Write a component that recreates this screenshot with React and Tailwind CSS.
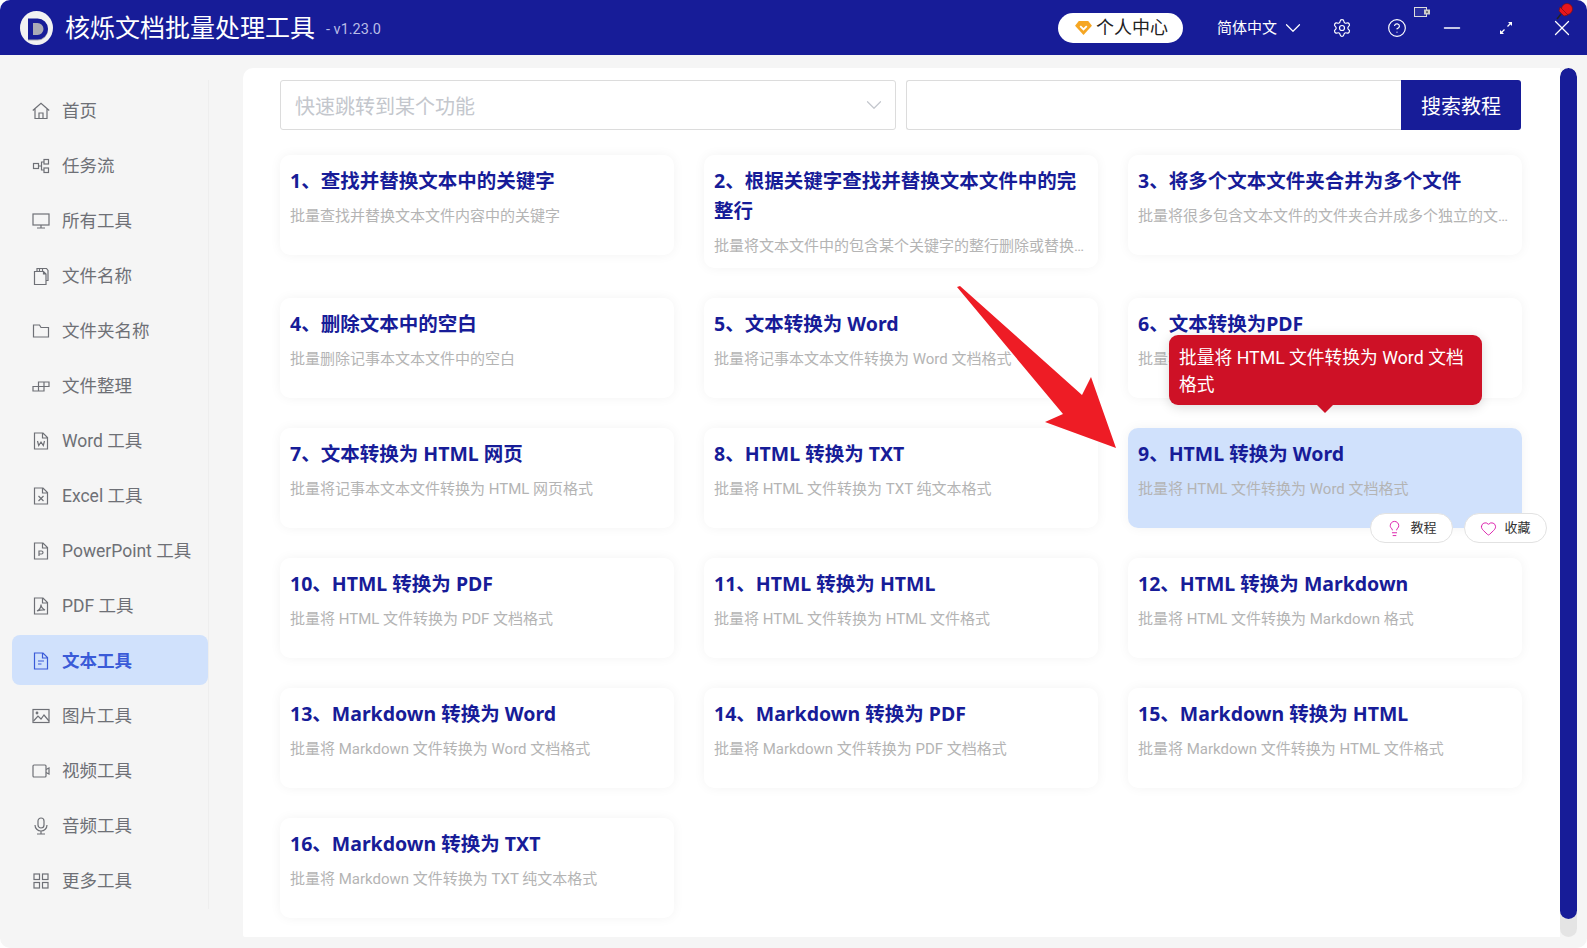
import { ChevronDown, Heart, Lightbulb, Settings, CircleHelp, Minus, X } from 'lucide-react';

const FONT = "font-['Roboto','Noto_Sans_CJK_SC',sans-serif]";

const Doc = ({ children }) => (
  <svg viewBox="0 0 18 18" className="w-[18px] h-[18px]" fill="none" stroke="currentColor" strokeWidth="1.2">
    <path d="M2.500 1h8.500l4.500 4.500V17h-13z M10.500 1v5h5" />
    {children}
  </svg>
);

const Svg = ({ children }) => (
  <svg viewBox="0 0 18 18" className="w-[18px] h-[18px]" fill="none" stroke="currentColor" strokeWidth="1.2">
    {children}
  </svg>
);

const navItems = [
  ['首页', <Svg><path d="M.8 8.500 9 1.200l8.200 7.300M3 7v9.500h12V7M7 16.500V11h4v5.500" /></Svg>],
  ['任务流', <Svg><rect x="1.500" y="6.500" width="5" height="5" /><rect x="12" y="2.500" width="4.500" height="4.500" /><rect x="12" y="11" width="4.500" height="4.500" /><path d="M6.500 9H9.500V5H12M9.500 9v4H12" /></Svg>],
  ['所有工具', <Svg><rect x="1" y="2" width="16" height="11" /><path d="M9 13v3M5 16h8" /></Svg>],
  ['文件名称', <Svg><path d="M2.500 4.500v13h11.500V7l-2.500-2.500zM11.500 4.500V7H14M5 4.500V1.500h9.500l1.500 2v10h-2" /><path d="M7.500 1.500v3M10.500 1.500v3" /></Svg>],
  ['文件夹名称', <Svg><path d="M1.500 3h6l1.500 2.500h7.500V15h-15z" /></Svg>],
  ['文件整理', <Svg><path d="M1 9.500h5.500V14H1zM6.500 9.500h5.500V14H6.500zM6.500 9.500V5h5.500v4.500M12 5h5v4.500h-5" /></Svg>],
  ['Word 工具', <Doc><path d="M5.500 9l1.200 4.500L9 10l2.300 3.500L12.500 9" /></Doc>],
  ['Excel 工具', <Doc><path d="M6.500 9l5 5M11.500 9l-5 5" /></Doc>],
  ['PowerPoint 工具', <Doc><path d="M7 14V9h2.500a1.500 1.500 0 0 1 0 3H7" /></Doc>],
  ['PDF 工具', <Doc><path d="M9 7.500c0 3-2 5.500-4 6.500 3-1 5-1.500 8-1-2-1-4-3-4-5.500z" /></Doc>],
  ['文本工具', <Doc><path d="M6 9h6M6 12h3.500" /></Doc>],
  ['图片工具', <Svg><rect x="1" y="2.500" width="16" height="13" /><path d="M1.500 14l4.500-5 3 3 3-4 5 6" /><circle cx="5" cy="6" r="0.800" /></Svg>],
  ['视频工具', <Svg><rect x="1" y="3" width="13" height="12" rx="1" /><path d="M14 7.500l3-1.500v6l-3-1.500" /></Svg>],
  ['音频工具', <Svg><rect x="6" y="1" width="6" height="10" rx="3" /><path d="M3 8a6 6 0 0 0 12 0M9 14v3M5 17h8" /></Svg>],
  ['更多工具', <Svg><rect x="2" y="2" width="5.500" height="5.500" /><rect x="10.500" y="2" width="5.500" height="5.500" /><rect x="2" y="10.500" width="5.500" height="5.500" /><rect x="10.500" y="10.500" width="5.500" height="5.500" /></Svg>],
];

const cards = [
  ['1、查找并替换文本中的关键字', '批量查找并替换文本文件内容中的关键字'],
  ['2、根据关键字查找并替换文本文件中的完整行', '批量将文本文件中的包含某个关键字的整行删除或替换为其他内容'],
  ['3、将多个文本文件夹合并为多个文件', '批量将很多包含文本文件的文件夹合并成多个独立的文本文件'],
  ['4、删除文本中的空白', '批量删除记事本文本文件中的空白'],
  ['5、文本转换为 Word', '批量将记事本文本文件转换为 Word 文档格式'],
  ['6、文本转换为PDF', '批量将记事本文本文件转换为 PDF 文档格式'],
  ['7、文本转换为 HTML 网页', '批量将记事本文本文件转换为 HTML 网页格式'],
  ['8、HTML 转换为 TXT', '批量将 HTML 文件转换为 TXT 纯文本格式'],
  ['9、HTML 转换为 Word', '批量将 HTML 文件转换为 Word 文档格式'],
  ['10、HTML 转换为 PDF', '批量将 HTML 文件转换为 PDF 文档格式'],
  ['11、HTML 转换为 HTML', '批量将 HTML 文件转换为 HTML 文件格式'],
  ['12、HTML 转换为 Markdown', '批量将 HTML 文件转换为 Markdown 格式'],
  ['13、Markdown 转换为 Word', '批量将 Markdown 文件转换为 Word 文档格式'],
  ['14、Markdown 转换为 PDF', '批量将 Markdown 文件转换为 PDF 文档格式'],
  ['15、Markdown 转换为 HTML', '批量将 Markdown 文件转换为 HTML 文件格式'],
  ['16、Markdown 转换为 TXT', '批量将 Markdown 文件转换为 TXT 纯文本格式'],
];

function Header() {
  return (
    <header className="relative h-[55px] shrink-0 bg-[#171c98] rounded-t-[10px] flex items-center pl-[20px] text-white">
      <svg viewBox="0 0 33 34" className="w-[33px] h-[34px] shrink-0">
        <ellipse cx="16.500" cy="17" rx="16.500" ry="17" fill="#f2f2f2" />
        <path d="M8 10h9.500a10.500 10.500 0 0 1 0 21H8z" fill="#a9a9b5" transform="translate(0 -1.500)" />
        <path d="M8 8h9.500a10.500 10.500 0 0 1 0 21H8z M13 12.500v12h4.500a6 6 0 0 0 0-12z" fill="#171c98" fillRule="evenodd" transform="translate(0 -0.500)" />
      </svg>
      <span className="ml-[12px] mt-[3px] text-[25px] leading-[34px]">核烁文档批量处理工具</span>
      <span className="ml-[11px] mt-[5px] text-[14.500px] text-[#b9bce6]">- v1.23.0</span>
      <div className="ml-auto flex items-center">
        <div className="w-[125px] h-[30px] bg-white rounded-full flex items-center text-[#222] text-[18px] pl-[17px]">
          <svg viewBox="0 0 18 16" className="w-[17px] h-[15px] mr-[4px]">
            <path d="M4 1h10l4 5-9 10L0 6z" fill="#f5a623" />
            <path d="M5.500 6.500 9 10l3.500-3.500" fill="none" stroke="#fff" strokeWidth="2" />
          </svg>
          个人中心
        </div>
        <span className="ml-[34px] mt-[1px] text-[15px] w-[60px]">简体中文</span>
        <ChevronDown className="ml-[3px] w-[26px] h-[26px]" strokeWidth={1.1} />
        <Settings className="ml-[26px] w-[20px] h-[20px]" strokeWidth={1.4} />
        <CircleHelp className="ml-[35px] w-[20px] h-[20px]" strokeWidth={1.4} />
        <Minus className="ml-[32px] w-[26px] h-[26px]" strokeWidth={1.2} />
        <svg viewBox="0 0 14 14" className="ml-[34px] w-[14px] h-[14px]" fill="none" stroke="currentColor" strokeWidth="1.300">
          <path d="M8.500 5.500l3-3M5.500 8.500l-3 3" />
          <path d="M9 1h4v4zM1 9v4h4z" fill="#fff" stroke="none" />
        </svg>
        <X className="ml-[36px] mr-[12px] w-[26px] h-[26px]" strokeWidth={1.2} />
      </div>
      <svg viewBox="0 0 16 10" className="absolute left-[1414px] top-[7px] w-[16px] h-[10px]">
        <rect width="13" height="10" fill="#ddd" />
        <rect x="1" y="1" width="11" height="8" fill="#2a2f9e" />
        <rect x="10" y="2.500" width="6" height="5" fill="#ccc" />
        <rect x="12" y="4" width="2" height="2" fill="#777" />
      </svg>
      <svg viewBox="0 0 18 18" className="absolute left-[1556px] top-[2px] w-[18px] h-[18px]">
        <path d="M1 17l4-5" stroke="#222" strokeWidth="1.500" />
        <circle cx="11" cy="7" r="5.500" fill="#e8161c" stroke="#7a1012" strokeWidth="0.700" />
        <path d="M4 5l8 8-4 1-5-5z" fill="#e8161c" stroke="#7a1012" strokeWidth="0.700" />
      </svg>
    </header>
  );
}

function Sidebar() {
  return (
    <aside className="w-[209px] shrink-0 pl-[12px] pt-[25px]">
      <nav className="h-[829px] pt-[5px] border-r border-[#eeeeee] flex flex-col gap-[5px]">
        {navItems.map(([label, icon]) => {
          const active = label === '文本工具';
          return (
            <div
              key={label}
              className={`h-[50px] shrink-0 rounded-[8px] flex items-center pl-[20px] pt-[2px] gap-[12px] text-[17.500px] ${
                active ? 'bg-[#d0e1fc] text-[#3a5bd8] font-bold' : 'text-[#6e7076]'
              }`}
            >
              {icon}
              <span>{label}</span>
            </div>
          );
        })}
      </nav>
    </aside>
  );
}

function Card({ title, desc, hovered }) {
  return (
    <div
      className={`relative rounded-[10px] pl-[10px] pr-[11px] pt-[11px] pb-[11px] shadow-[0_0_12px_rgba(0,0,0,0.05)] min-h-[100px] ${
        hovered ? 'bg-[#d0e1fc]' : 'bg-white'
      }`}
    >
      <div className="font-['Noto_Sans','Noto_Sans_CJK_SC',sans-serif] text-[19.500px] leading-[30px] font-bold text-[#171c98]">{title}</div>
      <div className="mt-[9px] text-[15px] leading-[22px] text-[#b4b4b4] truncate">{desc}</div>
      {hovered && (
        <>
          <div className="absolute left-[41px] -top-[93px] w-[313px] h-[70px] bg-[#ce1126] rounded-[9px] px-[10px] py-[10px] text-white text-[17.750px] leading-[27px] shadow-[0_2px_12px_rgba(0,0,0,0.15)] z-10">
            批量将 HTML 文件转换为 Word 文档格式
          </div>
          <div className="absolute left-[189px] -top-[23px] w-0 h-0 border-x-[8px] border-x-transparent border-t-[8px] border-t-[#ce1126] z-10" />
          <div className="absolute -bottom-[15px] -right-[25px] flex gap-[11px] z-10">
            <div className="w-[83px] h-[30px] rounded-full bg-white border border-[#e2e2e2] flex items-center justify-center gap-[7px] text-[13px] text-[#333]">
              <Lightbulb className="w-[17px] h-[17px] text-[#d916a8]" strokeWidth={1.3} />
              教程
            </div>
            <div className="w-[83px] h-[30px] rounded-full bg-white border border-[#e2e2e2] flex items-center justify-center gap-[7px] text-[13px] text-[#333]">
              <Heart className="w-[17px] h-[17px] text-[#d916a8]" strokeWidth={1.3} />
              收藏
            </div>
          </div>
        </>
      )}
    </div>
  );
}

export default function App() {
  return (
    <div className={`relative w-[1587px] h-[948px] overflow-hidden bg-white ${FONT}`}>
      <div className="h-full flex flex-col bg-[#f5f5f5] rounded-[10px]">
        <Header />
        <div className="flex-1 flex min-h-0">
          <Sidebar />
          <div className="w-[34px] shrink-0" />
          <main className="mt-[13px] mb-[11px] w-[1317px] bg-white rounded-tl-[10px] rounded-bl-[2px] pl-[37px] pt-[12px]">
            <div className="w-[1241px] flex gap-[10px] h-[50px]">
              <div className="w-[616px] border border-[#dcdcdc] rounded-[3px] flex items-center justify-between pl-[14px] pr-[8px] pt-[3px] text-[20px] text-[#c4c7cd]">
                <span>快速跳转到某个功能</span>
                <ChevronDown className="w-[26px] h-[26px] -mt-[3px]" strokeWidth={1.1} />
              </div>
              <div className="flex-1 flex">
                <div className="flex-1 border border-r-0 border-[#dcdcdc] rounded-l-[3px]" />
                <div className="w-[120px] bg-[#171c98] text-white text-[20px] pt-[3px] rounded-r-[3px] flex items-center justify-center">
                  搜索教程
                </div>
              </div>
            </div>
            <div className="mt-[25px] w-[1242px] grid grid-cols-3 gap-[30px] items-start">
              {cards.map(([title, desc], i) => (
                <Card key={title} title={title} desc={desc} hovered={i === 8} />
              ))}
            </div>
          </main>
          <div className="mt-[13px] mb-[11px] w-[17px] rounded-full bg-[#e4e4e4] overflow-hidden">
            <div className="h-[851px] rounded-full bg-[#171c98]" />
          </div>
        </div>
      </div>
      <svg className="absolute left-0 top-0 pointer-events-none" width="1587" height="948">
        <polygon points="957,287 960,286 1082,395 1091,377 1116,448 1045,422 1063,414" fill="#ee1c25" />
      </svg>
    </div>
  );
}
